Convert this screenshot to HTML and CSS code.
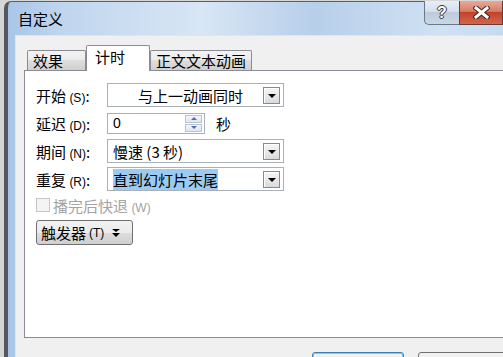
FILE: index.html
```html
<!DOCTYPE html>
<html lang="zh-CN">
<head>
    <meta charset="UTF-8">
    <title>自定义</title>
    <link rel="stylesheet" href="styles.css">
</head>
<body>
    <div class="window">
        <div class="titlebar">
            <span class="title">自定义</span>
            <div class="caption">
                <span class="help">?</span>
                <span class="close">
                    <svg width="17" height="13" viewBox="0 0 17 13">
                        <path d="M3 2 L14 11 M14 2 L3 11" stroke="#3a2620" stroke-width="5" stroke-linecap="square"/>
                        <path d="M3 2 L14 11 M14 2 L3 11" stroke="#fff" stroke-width="3" stroke-linecap="square"/>
                    </svg>
                </span>
            </div>
        </div>
        <div class="client">
            <div class="tabs">
                <span class="tab">效果</span>
                <span class="tab active">计时</span>
                <span class="tab">正文文本动画</span>
            </div>
            <div class="page">
                <div class="form">
                    <span class="label">开始 <span class="key">(S)</span>:</span>
                    <div class="combo">
                        <span class="value centered">与上一动画同时</span>
                        <span class="drop"></span>
                    </div>

                    <span class="label">延迟 <span class="key">(D)</span>:</span>
                    <div class="delay">
                        <div class="spin">
                            <span class="value num">0</span>
                            <span class="spinner">
                                <span class="up"></span>
                                <span class="down"></span>
                            </span>
                        </div>
                        <span class="unit">秒</span>
                    </div>

                    <span class="label">期间 <span class="key">(N)</span>:</span>
                    <div class="combo">
                        <span class="value">慢速 (3 秒)</span>
                        <span class="drop"></span>
                    </div>

                    <span class="label">重复 <span class="key">(R)</span>:</span>
                    <div class="combo">
                        <span class="value"><span class="sel">直到幻灯片末尾</span></span>
                        <span class="drop"></span>
                    </div>
                </div>

                <div class="check disabled">
                    <span class="box"></span>
                    <span>播完后快退 <span class="key">(W)</span></span>
                </div>

                <button class="trigger" type="button">
                    触发器 <span class="key">(T)</span>
                    <svg class="chev" width="10" height="10" viewBox="0 0 10 10">
                        <path d="M1 1 H9 L5 4 Z" fill="#000"/>
                        <path d="M1 5 H9 L5 9 Z" fill="#000"/>
                    </svg>
                </button>
            </div>
            <div class="actions">
                <button class="btn default" type="button">确定</button>
                <button class="btn" type="button">取消</button>
            </div>
        </div>
    </div>
</body>
</html>
```

FILE: styles.css
```css
* {
    margin: 0;
    padding: 0;
    box-sizing: border-box;
}

body {
    width: 503px;
    height: 357px;
    overflow: hidden;
    background: #d6d6d6;
    font-family: "Noto Sans CJK SC", "Liberation Sans", sans-serif;
    font-size: 15px;
    color: #000;
}

.window {
    width: 560px;
    margin: 1px 0 0 4px;
    border: 1px solid #5b6068;
    border-left: 4px solid #55595e;
    border-radius: 7px 7px 0 0;
    padding: 0 7px;
    background: linear-gradient(to right, #a8c6e7 0%, #c0d6ee 10%, #d8e6f5 35%, #b7cfe9 55%, #d0e1f3 78%, #bdd4ec 100%);
}

/* title bar */
.titlebar {
    display: flex;
    align-items: center;
    height: 33px;
}

.title {
    padding-left: 3px;
    font-size: 15px;
}

.caption {
    display: flex;
    align-self: flex-start;
    margin-left: auto;
    margin-right: 53px;
    margin-top: -1px;
    height: 24px;
}

.help {
    width: 35px;
    border: 1px solid #6b788a;
    border-top: none;
    border-right: none;
    border-radius: 0 0 0 5px;
    background: linear-gradient(#e7eef7, #d5e0ec 45%, #bdcbdc 50%, #cad7e5);
    text-align: center;
    font: bold 16px "Liberation Sans", sans-serif;
    line-height: 23px;
    color: #fff;
    text-shadow: 1px 0 #2b3440, -1px 0 #2b3440, 0 1px #2b3440, 0 -1px #2b3440;
}

.close {
    width: 44px;
    border: 1px solid #6b3b33;
    border-top: none;
    background: linear-gradient(#e9a898, #d77d66 45%, #c2432b 50%, #d2654b);
    display: flex;
    align-items: center;
    justify-content: center;
}

/* client area */
.client {
    background: #f0f0f0;
    border: 1px solid #dde6f0;
    border-bottom: none;
    padding: 9px 0 0 8px;
    height: 400px;
}

.tabs {
    display: flex;
    align-items: flex-end;
    height: 25px;
    padding-left: 3px;
    position: relative;
    z-index: 1;
}

.tab {
    min-width: 59px;
    height: 20px;
    padding: 1px 5px 0;
    line-height: 18px;
    border: 1px solid #898c95;
    border-bottom: none;
    border-radius: 2px 2px 0 0;
    background: linear-gradient(#f3f3f3, #ebebeb 50%, #dedede 50%, #d0d0d0);
}

.tab.active {
    min-width: 64px;
    height: 26px;
    padding: 1px 8px 0;
    line-height: 20px;
    margin-bottom: -1px;
    background: #fff;
}

.page {
    width: 540px;
    height: 268px;
    border: 1px solid #898c95;
    background: #fff;
    padding: 12px 0 0 11px;
}

.form {
    display: grid;
    grid-template-columns: 71px 177px;
    grid-auto-rows: 24px;
    row-gap: 4px;
    align-items: center;
}

.label {
    white-space: nowrap;
}

.key {
    font-family: "Liberation Sans", sans-serif;
    font-size: 12px;
}

.combo {
    height: 24px;
    border: 1px solid #a9b0b8;
    display: flex;
    align-items: center;
    padding-left: 5px;
}

.value {
    flex: 1;
    white-space: nowrap;
}

.value.centered {
    padding-left: 25px;
}

.sel {
    background: #9ccaf2;
}

.drop {
    width: 17px;
    height: 17px;
    margin-right: 3px;
    border: 1px solid #8a8a8a;
    background: linear-gradient(#f6f6f6, #dadada);
    box-shadow: inset 1px 1px #fff;
    display: flex;
    align-items: center;
    justify-content: center;
}

.drop::after {
    content: "";
    margin-top: 1px;
    border-left: 4px solid transparent;
    border-right: 4px solid transparent;
    border-top: 4px solid #000;
}

.delay {
    display: flex;
    align-items: center;
}

.spin {
    width: 98px;
    height: 21px;
    border: 1px solid #a9b0b8;
    display: flex;
    align-items: center;
    padding-left: 5px;
}

.num {
    font-family: "Liberation Sans", sans-serif;
    font-size: 14px;
}

.spinner {
    width: 17px;
    height: 17px;
    margin-right: 2px;
    display: flex;
    flex-direction: column;
    gap: 1px;
}

.spinner span {
    flex: 1;
    border: 1px solid #b9c4d1;
    background: linear-gradient(#f3f6fa, #dde5ee);
    display: flex;
    align-items: center;
    justify-content: center;
}

.spinner .up::after {
    content: "";
    border-left: 3px solid transparent;
    border-right: 3px solid transparent;
    border-bottom: 3px solid #4f6ea6;
}

.spinner .down::after {
    content: "";
    border-left: 3px solid transparent;
    border-right: 3px solid transparent;
    border-top: 3px solid #4f6ea6;
}

.unit {
    margin-left: 11px;
}

.check {
    display: flex;
    align-items: center;
    height: 16px;
    margin-top: 6px;
}

.check.disabled {
    color: #a3a3a3;
}

.box {
    width: 14px;
    height: 14px;
    margin-right: 3px;
    border: 1px solid #c6c6c6;
    background: #f4f4f4;
}

.trigger {
    display: flex;
    align-items: center;
    gap: 3px;
    width: 97px;
    height: 25px;
    margin-top: 7px;
    padding-left: 4px;
    border: 1px solid #707070;
    border-radius: 3px;
    background: linear-gradient(#f2f2f2, #ebebeb 50%, #dddddd 51%, #cfcfcf);
    font: inherit;
    color: #000;
}

.chev {
    margin-left: 4px;
}

.actions {
    display: flex;
    gap: 14px;
    padding-left: 288px;
    margin-top: 14px;
}

.btn {
    width: 92px;
    height: 23px;
    border: 1px solid #707070;
    border-radius: 3px;
    background: linear-gradient(#f2f2f2, #ebebeb 50%, #dddddd 51%, #cfcfcf);
    font: inherit;
    color: #000;
}

.btn.default {
    border-color: #3c7fb1;
    box-shadow: inset 0 0 0 1px #6fd0f5;
}
```
